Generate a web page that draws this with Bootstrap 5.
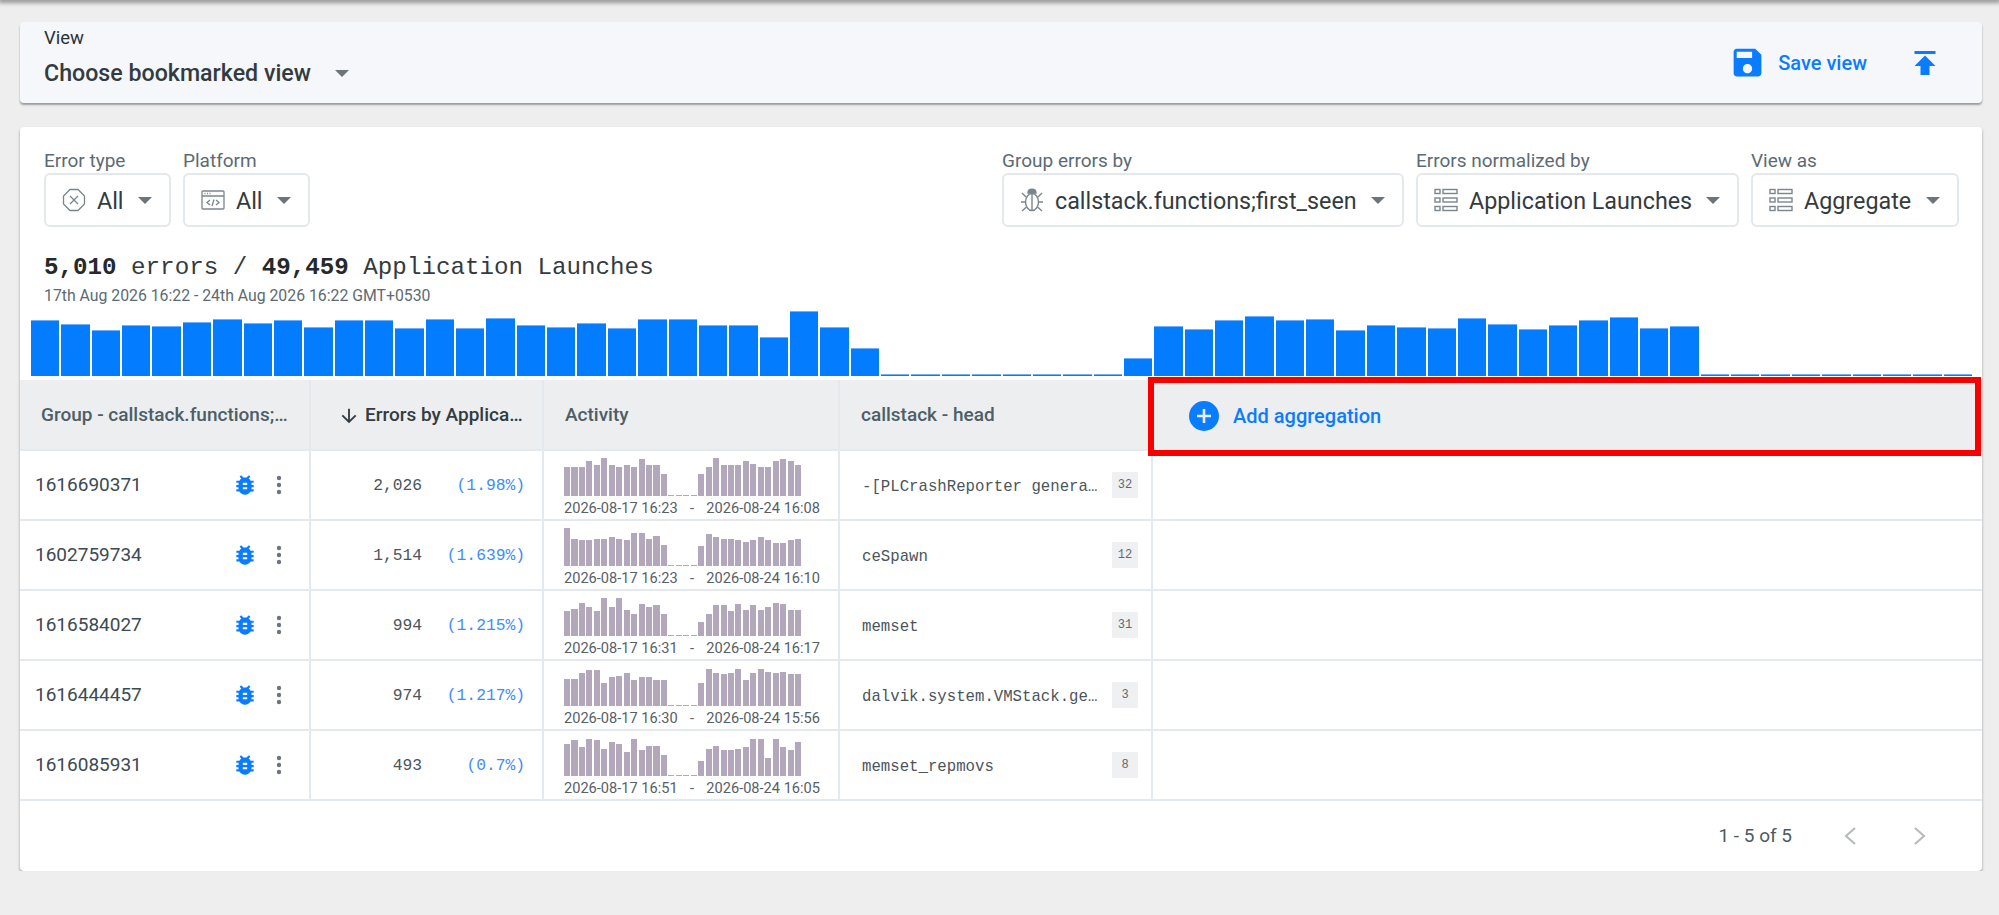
<!DOCTYPE html>
<html lang="en">
<head>
  <meta charset="UTF-8" />
  <meta name="viewport" content="width=device-width, initial-scale=1.0"/>
  <title>Errors</title>
  <link href="https://cdn.jsdelivr.net/npm/bootstrap@5.3.0/dist/css/bootstrap.min.css" rel="stylesheet"/>
  <style>
    body {
      background-color: #eeeeee;
      font-family: Roboto, "Liberation Sans", sans-serif;
      color: #333b40;
      padding: 0 17px 0 20px;
      overflow: hidden;
    }
    .top-shade {
      height: 0;
      margin: 0 -17px 22px -20px;
      box-shadow: 0 0 5px 2px rgba(0,0,0,.55);
    }
    .view-bar {
      height: 81px;
      background-color: #f5f7fa;
      border-radius: 4px;
      padding: 0 39px 0 24px;
      box-shadow: 0 2px 2px rgba(0,0,0,.35);
      margin-bottom: 24px;
    }
    .view-label { font-size: 18.5px; line-height: 20px; color: #2b3338; padding-top: 6px; }
    .view-name { font-size: 23.2px; line-height: 28px; font-weight: 500; margin-top: 11px; color: #333b40; }
    .caret-down {
      display: inline-block;
      width: 0;
      height: 0;
      border-left: 7px solid transparent;
      border-right: 7px solid transparent;
      border-top: 7px solid #6f7478;
    }
    .save-link { font-size: 20px; font-weight: 500; color: #0a7cff; text-decoration: none; gap: 12px; }
    .main-card {
      background-color: #fff;
      border: 0;
      border-radius: 4px;
      height: 744px;
      box-shadow: 0 2px 3px rgba(0,0,0,.35);
    }
    .filter-row { padding: 24px 23px 0 24px; }
    .filter-label { font-size: 19px; line-height: 20px; color: #5c6b73; margin-bottom: 2px; }
    .pick-btn {
      height: 54px;
      background-color: #fff;
      border: 2px solid #e3e8ec;
      border-radius: 6px;
      font-size: 23.3px;
      color: #333b40;
      padding: 0 17px 0 16px;
      display: flex;
      align-items: center;
      justify-content: space-between;
      gap: 11px;
    }
    .pick-btn span { padding-top: 2px; }
    .pick-btn.dropdown-toggle::after {
      border-top: 7px solid #6f7478;
      border-left: 7px solid transparent;
      border-right: 7px solid transparent;
      border-bottom: 0;
      margin-left: 0;
    }
    .pick-sm, .pick-sm .pick-btn { width: 127px; }
    .pick-group { width: 402px; }
    .pick-norm { width: 323px; }
    .pick-as { width: 208px; }
    .summary-line {
      font-family: "Liberation Mono", monospace;
      font-size: 24.2px;
      line-height: 30px;
      color: #333b40;
      padding: 0 24px;
      margin-top: 26px;
    }
    .summary-line b { font-weight: 700; color: #24292d; }
    .date-line { font-size: 15.8px; line-height: 20px; color: #5c6b73; padding: 0 24px; margin-top: 3px; }
    .big-chart {
      height: 65px;
      margin: 5px 10px 4px 11px;
      gap: 2px;
    }
    .big-chart span { flex: 1 1 0; background-color: #037dfd; border-top: 1px solid #6db0fb; }
    .err-table { table-layout: fixed; margin: 0; --bs-table-border-color: #e4e9ed; }
    .err-table th, .err-table td {
      border-bottom: 2px solid #e4e9ed;
      border-right: 2px solid #e4e9ed;
      padding: 0;
      vertical-align: middle;
    }
    .err-table th:last-child, .err-table td:last-child { border-right: 0; }
    .err-table thead th {
      height: 70px;
      background-color: #eceef0;
      font-size: 19px;
      font-weight: 500;
      color: #4d5e66;
      padding: 2px 0 0 21px;
      white-space: nowrap;
    }
    .err-table tbody td { height: 70px; }
    .col-group { width: 290px; }
    .col-errors { width: 233px; }
    .col-activity { width: 296px; }
    .col-stack { width: 313px; }
    .sort-head { color: #333b40; gap: 5px; margin-left: 6px; }
    .add-agg { color: #0a7cff; font-size: 20px; font-weight: 500; padding-left: 15px; gap: 14px; }
    .red-outline {
      position: absolute;
      top: -3px;
      bottom: -7px;
      left: -5px;
      right: 1px;
      border: 6px solid #f90000;
      pointer-events: none;
    }
    .group-id { font-size: 19px; color: #3c4a52; padding-left: 15px; }
    .row-bug { margin-right: 18px; }
    .row-dots { margin-right: 27px; }
    .mono-num { font-family: "Liberation Mono", monospace; font-size: 16.3px; color: #4a555c; padding: 2px 17px 0 0; }
    .pct-num { color: #3d8ef8; width: 103px; }
    .spark-box { padding: 5px 0 0 20px; width: 276px; }
    .spark-bars { height: 38px; gap: 1.4px; width: 237px; }
    .spark-bars span { flex: 1 1 0; background-color: #b3a8bb; }
    .spark-dates { font-size: 14.6px; line-height: 18px; color: #566067; width: 256px; margin-top: 3px; }
    .stack-name {
      font-family: "Liberation Mono", monospace;
      font-size: 15.7px;
      color: #4a555c;
      padding: 6px 0 0 22px;
      white-space: nowrap;
    }
    .count-tag {
      width: 26px;
      height: 26px;
      background-color: #eef0f2;
      font-family: "Liberation Mono", monospace;
      font-size: 12px;
      color: #5c6b73;
      margin: 0 13px 0 0;
    }
    .table-foot { height: 69px; padding-right: 55px; }
    .foot-count { font-size: 19px; color: #4d5a61; margin-right: 51px; padding-top: 2px; }
    .foot-next { margin-left: 56px; }
  </style>
</head>
<body>
  <div class="top-shade"></div>

  <div class="view-bar d-flex justify-content-between">
    <div>
      <div class="view-label">View</div>
      <div class="view-name d-flex align-items-center gap-4">Choose bookmarked view <span class="caret-down"></span></div>
    </div>
    <div class="d-flex align-items-center">
      <a class="save-link d-flex align-items-center" href="#">
        <svg width="37" height="37" viewBox="0 0 24 24" fill="#0a7cff"><path d="M17 3H5c-1.11 0-2 .9-2 2v14c0 1.1.89 2 2 2h14c1.1 0 2-.9 2-2V7l-4-4zm-5 16c-1.66 0-3-1.34-3-3s1.34-3 3-3 3 1.34 3 3-1.34 3-3 3zm3-10H5V5h10v4z"/></svg>
        <span class="me-3">Save view</span>
      </a>
      <svg class="ms-4" width="36" height="36" viewBox="0 0 24 24" fill="#0a7cff"><path d="M5 4v2h14V4H5zm0 10h4v6h6v-6h4l-7-7-7 7z"/></svg>
    </div>
  </div>

  <div class="card main-card">
    <div class="filter-row d-flex justify-content-between">
      <div class="d-flex gap-2">
        <div class="pick-sm">
          <div class="filter-label">Error type</div>
          <button class="btn pick-btn dropdown-toggle">
            <svg width="24" height="24" viewBox="0 0 24 24" fill="none" stroke="#7a868d" stroke-width="1.3"><path d="M8 1.500h8L22.500 8v8L16 22.500H8L1.500 16V8z"/><path d="M8 8l8 8M16 8l-8 8"/></svg>
            <span class="me-auto">All</span>
          </button>
        </div>
        <div class="ms-1 pick-sm">
          <div class="filter-label">Platform</div>
          <button class="btn pick-btn dropdown-toggle">
            <svg width="24" height="24" viewBox="0 0 24 24" fill="none" stroke="#7a868d" stroke-width="1.3"><rect x="1" y="3" width="22" height="18" rx="1"/><path d="M1 8h22M3.500 5.500h1M6 5.500h1M8.500 5.500h1"/><path d="M9 12l-3 2.500L9 17M15 12l3 2.500L15 17M13 11.500l-2 6.500"/></svg>
            <span class="me-auto">All</span>
          </button>
        </div>
      </div>
      <div class="d-flex gap-2">
        <div>
          <div class="filter-label">Group errors by</div>
          <button class="btn pick-btn dropdown-toggle pick-group">
            <svg width="24" height="26" viewBox="0 0 24 26" fill="none" stroke="#7a868d" stroke-width="1.4"><path d="M8 6c0-5 8-5 8 0z" fill="#7a868d"/><ellipse cx="12" cy="15" rx="6.500" ry="8.500"/><path d="M12 7v16M6 10L2 6M18 10l4-4M5.500 15H1M18.500 15H23M6.500 20L2 24M17.500 20L22 24"/></svg>
            <span class="me-auto">callstack.functions;first_seen</span>
          </button>
        </div>
        <div class="ms-1">
          <div class="filter-label">Errors normalized by</div>
          <button class="btn pick-btn dropdown-toggle pick-norm">
            <svg width="24" height="24" viewBox="0 0 24 24" fill="none" stroke="#7a868d" stroke-width="1.4"><rect x="1" y="1.500" width="5" height="4"/><rect x="9" y="1.500" width="14" height="4"/><rect x="1" y="10" width="5" height="4"/><rect x="9" y="10" width="14" height="4"/><rect x="1" y="18.500" width="5" height="4"/><rect x="9" y="18.500" width="14" height="4"/></svg>
            <span class="me-auto">Application Launches</span>
          </button>
        </div>
        <div class="ms-1">
          <div class="filter-label">View as</div>
          <button class="btn pick-btn dropdown-toggle pick-as">
            <svg width="24" height="24" viewBox="0 0 24 24" fill="none" stroke="#7a868d" stroke-width="1.4"><rect x="1" y="1.500" width="5" height="4"/><rect x="9" y="1.500" width="14" height="4"/><rect x="1" y="10" width="5" height="4"/><rect x="9" y="10" width="14" height="4"/><rect x="1" y="18.500" width="5" height="4"/><rect x="9" y="18.500" width="14" height="4"/></svg>
            <span class="me-auto">Aggregate</span>
          </button>
        </div>
      </div>
    </div>

    <div class="summary-line"><b>5,010</b> errors / <b>49,459</b> Application Launches</div>
    <div class="date-line">17th Aug 2026 16:22 - 24th Aug 2026 16:22 GMT+0530</div>
    <div id="bigChart" class="big-chart d-flex align-items-end"></div>

    <table class="table err-table">
      <colgroup>
        <col class="col-group"/><col class="col-errors"/><col class="col-activity"/><col class="col-stack"/><col/>
      </colgroup>
      <thead>
        <tr>
          <th>Group - callstack.functions;…</th>
          <th>
            <div class="d-flex align-items-center sort-head">
              <svg width="22" height="22" viewBox="0 0 24 24" fill="#333b40"><path d="M20 12l-1.410-1.410L13 16.170V4h-2v12.170l-5.580-5.590L4 12l8 8 8-8z"/></svg>
              <span>Errors by Applica…</span>
            </div>
          </th>
          <th>Activity</th>
          <th>callstack - head</th>
          <th class="position-relative">
            <div class="add-agg d-flex align-items-center">
              <svg width="30" height="30" viewBox="0 0 30 30"><circle cx="15" cy="15" r="15" fill="#0a7cff"/><path d="M15 8v14M8 15h14" stroke="#eceef0" stroke-width="2.600"/></svg>
              <span>Add aggregation</span>
            </div>
            <div class="red-outline"></div>
          </th>
        </tr>
      </thead>
      <tbody id="rows"></tbody>
    </table>

    <div class="table-foot d-flex align-items-center justify-content-end">
      <span class="foot-count">1 - 5 of 5</span>
      <svg width="14" height="20" viewBox="0 0 14 20" fill="none" stroke="#b8bbbd" stroke-width="2.200"><path d="M12 2L3 10l9 8"/></svg>
      <svg class="foot-next" width="14" height="20" viewBox="0 0 14 20" fill="none" stroke="#b8bbbd" stroke-width="2.200"><path d="M2 2l9 8-9 8"/></svg>
    </div>
  </div>

  <script>
    const chartHeights = [56,52,46,51,50,54,57,53,56,49,56,56,48,57,48,58,51,49,53,48,57,57,51,51,39,65,49,28,2,2,2,2,
      2,2,2,2,18,50,47,56,60,56,57,46,51,49,48,58,52,47,51,56,59,48,50,2,2,2,2,2,2,2,2,2];

    const errorRows = [
      { id: "1616690371", count: "2,026", pct: "(1.98%)", from: "2026-08-17 16:23", to: "2026-08-24 16:08", stack: "-[PLCrashReporter genera…", tag: 32,
        spark: [29,29,29,35,31,38,31,29,31,29,37,31,31,22,1,1,1,1,22,29,38,31,31,31,35,32,29,29,35,37,35,31] },
      { id: "1602759734", count: "1,514", pct: "(1.639%)", from: "2026-08-17 16:23", to: "2026-08-24 16:10", stack: "ceSpawn", tag: 12,
        spark: [38,27,26,26,27,27,29,27,26,33,33,27,30,21,1,1,1,1,20,32,29,27,27,26,24,26,29,26,23,23,26,27] },
      { id: "1616584027", count: "994", pct: "(1.215%)", from: "2026-08-17 16:31", to: "2026-08-24 16:17", stack: "memset", tag: 31,
        spark: [25,27,33,29,25,38,29,38,26,22,32,29,31,22,1,1,1,1,14,22,31,31,25,32,26,31,26,29,33,32,26,26] },
      { id: "1616444457", count: "974", pct: "(1.217%)", from: "2026-08-17 16:30", to: "2026-08-24 15:56", stack: "dalvik.system.VMStack.ge…", tag: 3,
        spark: [27,27,33,36,36,23,29,30,33,26,29,29,26,26,1,1,1,1,23,37,33,32,33,37,26,33,37,34,33,34,32,32] },
      { id: "1616085931", count: "493", pct: "(0.7%)", from: "2026-08-17 16:51", to: "2026-08-24 16:05", stack: "memset_repmovs", tag: 8,
        spark: [32,36,29,37,36,27,34,32,24,37,26,30,30,21,1,1,1,1,15,27,30,26,26,27,29,37,37,18,37,29,26,34] },
    ];

    const barHtml = h => `<span style="height:${h}px"></span>`;

    document.getElementById("bigChart").innerHTML = chartHeights.map(barHtml).join("");

    document.getElementById("rows").innerHTML = errorRows.map(r => `
      <tr>
        <td>
          <div class="d-flex align-items-center">
            <span class="group-id flex-grow-1">${r.id}</span>
            <svg class="row-bug" width="26" height="26" viewBox="0 0 24 24" fill="#0a7cff"><path d="M20 8h-2.810c-.450-.780-1.070-1.450-1.820-1.960L17 4.410 15.590 3l-2.170 2.170C12.960 5.060 12.490 5 12 5c-.490 0-.960.060-1.410.170L8.410 3 7 4.410l1.620 1.630C7.880 6.550 7.260 7.220 6.810 8H4v2h2.090c-.050.330-.090.660-.090 1v1H4v2h2v1c0 .340.040.670.090 1H4v2h2.810c1.040 1.790 2.970 3 5.190 3s4.150-1.210 5.190-3H20v-2h-2.090c.050-.330.090-.660.090-1v-1h2v-2h-2v-1c0-.340-.040-.670-.090-1H20V8zm-6 8h-4v-2h4v2zm0-4h-4v-2h4v2z"/></svg>
            <svg class="row-dots" width="6" height="20" viewBox="0 0 6 20" fill="#6c757d"><circle cx="3" cy="3" r="2.200"/><circle cx="3" cy="10" r="2.200"/><circle cx="3" cy="17" r="2.200"/></svg>
          </div>
        </td>
        <td>
          <div class="d-flex justify-content-end mono-num">
            <span>${r.count}</span>
            <span class="pct-num text-end">${r.pct}</span>
          </div>
        </td>
        <td>
          <div class="spark-box">
            <div class="spark-bars d-flex align-items-end">${r.spark.map(barHtml).join("")}</div>
            <div class="spark-dates d-flex justify-content-between"><span>${r.from}</span><span>-</span><span>${r.to}</span></div>
          </div>
        </td>
        <td>
          <div class="d-flex align-items-center">
            <div class="stack-name">${r.stack}</div>
            <div class="count-tag ms-auto d-flex align-items-center justify-content-center">${r.tag}</div>
          </div>
        </td>
        <td></td>
      </tr>`).join("");
  </script>
  <script src="https://cdn.jsdelivr.net/npm/bootstrap@5.3.0/dist/js/bootstrap.bundle.min.js"></script>
</body>
</html>
